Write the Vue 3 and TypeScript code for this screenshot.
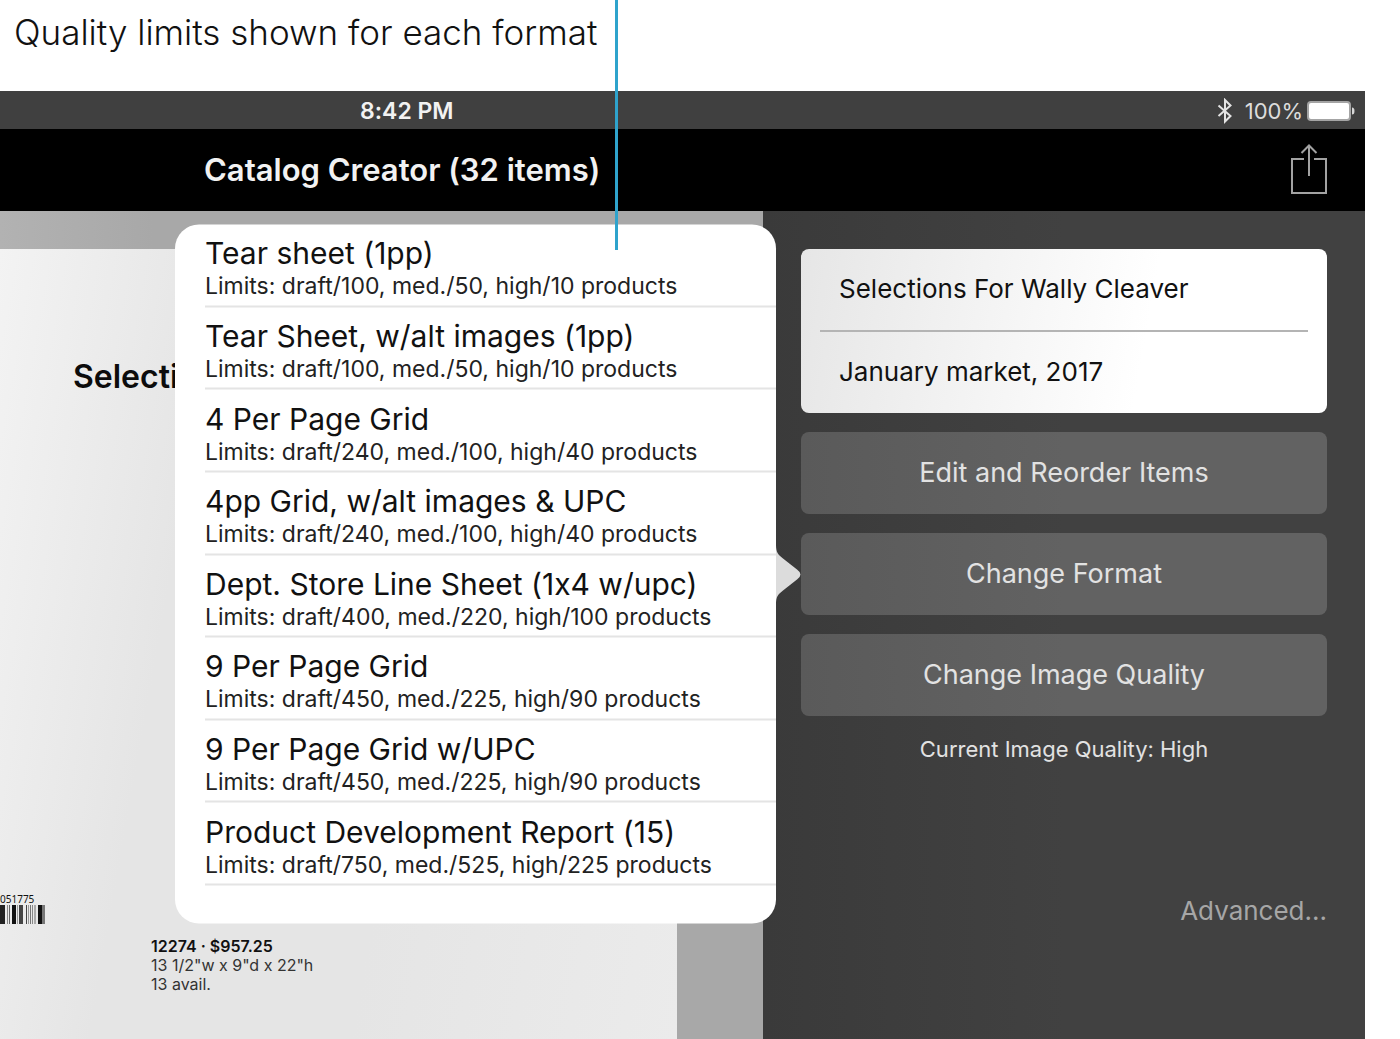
<script setup lang="ts">
import { ref } from 'vue'

interface Format {
  name: string
  draft: number
  med: number
  high: number
}

const formats: Format[] = [
  { name: 'Tear sheet (1pp)', draft: 100, med: 50, high: 10 },
  { name: 'Tear Sheet, w/alt images (1pp)', draft: 100, med: 50, high: 10 },
  { name: '4 Per Page Grid', draft: 240, med: 100, high: 40 },
  { name: '4pp Grid, w/alt images & UPC', draft: 240, med: 100, high: 40 },
  { name: 'Dept. Store Line Sheet (1x4 w/upc)', draft: 400, med: 220, high: 100 },
  { name: '9 Per Page Grid', draft: 450, med: 225, high: 90 },
  { name: '9 Per Page Grid w/UPC', draft: 450, med: 225, high: 90 },
  { name: 'Product Development Report (15)', draft: 750, med: 525, high: 225 },
]

const catalogTitle = ref('Selections For Wally Cleaver')
const catalogSubtitle = ref('January market, 2017')
const popoverOpen = ref(true)

// Each bar is [x, width, colour] in the barcode's own units.
const bars: [number, number, string][] = [
  [0, 5, '#222'], [7, 1, '#888'], [9, 1, '#666'], [12, 4, '#111'], [17, 1, '#999'],
  [19, 4, '#444'], [26, 1, '#444'], [28, 1, '#999'], [30, 1, '#777'], [32, 1, '#888'],
  [34, 2, '#aaa'], [38, 4, '#111'], [42, 3, '#777'],
]
</script>

<template>
  <div class="page">
    <header class="callout">
      <h1>Quality limits shown for each format</h1>
      <span class="leader"></span>
    </header>

    <div class="tablet">
      <div class="status">
        <span class="time">8:42 PM</span>
        <div class="indicators">
          <svg width="16" height="26" viewBox="0 0 16 26" aria-hidden="true">
            <path d="M1.500 7.500 L13.500 18 L8 23.500 V2 L13.500 7.500 L1.500 18" fill="none" stroke="#e4e4e4" stroke-width="2" />
          </svg>
          <span class="percent">100%</span>
          <svg width="48" height="20" viewBox="0 0 48 20" aria-hidden="true">
            <rect x="1" y="1" width="42" height="18" rx="3" fill="#fff" stroke="#a4a4a4" stroke-width="2" />
            <path d="M45 6.500 q2.500 0 2.500 3.500 t-2.500 3.500 z" fill="#d8d8d8" />
          </svg>
        </div>
      </div>

      <nav class="navbar">
        <h2>Catalog Creator (32 items)</h2>
        <button class="share" type="button" aria-label="Share">
          <svg width="38" height="52" viewBox="0 0 38 52" aria-hidden="true">
            <path d="M14 15 H2 V49 H36 V15 H24 M19 32 V1.500 M11.500 9 L19 1.500 L26.500 9" fill="none" stroke="#a2a2a2" stroke-width="2" />
          </svg>
        </button>
      </nav>

      <div class="content">
        <main class="preview">
          <article class="paper">
            <h3>Selecti</h3>
            <div class="products">
              <div class="barcode">
                <span>051775</span>
                <svg width="46" height="19" viewBox="0 0 46 19" aria-hidden="true">
                  <rect v-for="[x, w, fill] in bars" :key="x" :x="x" y="0" :width="w" height="19" :fill="fill" />
                </svg>
              </div>
              <p class="product">
                <strong>12274 · $957.25</strong><br />
                13 1/2"w x 9"d x 22"h<br />
                13 avail.
              </p>
            </div>
          </article>
        </main>

        <aside class="sidebar">
          <div class="fields">
            <input v-model="catalogTitle" type="text" aria-label="Catalog title" />
            <input v-model="catalogSubtitle" type="text" aria-label="Catalog subtitle" />
          </div>
          <button class="action" type="button">Edit and Reorder Items</button>
          <div class="anchor">
            <button class="action" type="button" :aria-expanded="popoverOpen" @click="popoverOpen = !popoverOpen">
              Change Format
            </button>
            <div v-if="popoverOpen" class="popover">
              <ul>
                <li v-for="f in formats" :key="f.name">
                  <button type="button">
                    <span class="name">{{ f.name }}</span>
                    <span class="limits">Limits: draft/{{ f.draft }}, med./{{ f.med }}, high/{{ f.high }} products</span>
                  </button>
                </li>
              </ul>
              <svg class="arrow" width="25" height="60" viewBox="0 0 25 60" aria-hidden="true">
                <path d="M0 0 C0 8 2 10 7 14 L21 25 Q28 30 21 35 L7 46 C2 50 0 52 0 60 Z" fill="#dcdcdc" />
              </svg>
            </div>
          </div>
          <button class="action" type="button">Change Image Quality</button>
          <p class="quality">Current Image Quality: High</p>
          <a class="advanced" href="#advanced">Advanced...</a>
        </aside>
      </div>
    </div>
  </div>
</template>

<style>
body {
  margin: 0;
  background: #fff;
}
</style>

<style scoped>
.page {
  position: relative;
  display: flex;
  flex-direction: column;
  min-height: 100vh;
  box-sizing: border-box;
  padding-right: 35px;
  overflow: hidden;
  font-family: Inter, "Liberation Sans", sans-serif;
  font-variant-ligatures: no-contextual;
  color: #111;
}

h1,
h2,
h3,
p,
ul {
  margin: 0;
  padding: 0;
  list-style: none;
}

button {
  border: 0;
  padding: 0;
  background: none;
  font: inherit;
  font-variant-ligatures: no-contextual;
  color: inherit;
  cursor: pointer;
}

svg {
  display: block;
}

.callout {
  padding: 12px 14px 39px;
}

.callout h1 {
  font-size: 35px;
  line-height: 40px;
  font-weight: 300;
  white-space: nowrap;
}

.leader {
  position: absolute;
  z-index: 3;
  top: 0;
  left: 615px;
  width: 3px;
  height: 250px;
  background: #2fa3cc;
}

.tablet {
  flex: 1;
  display: flex;
  flex-direction: column;
}

.status {
  display: flex;
  align-items: center;
  justify-content: space-between;
  height: 38px;
  box-sizing: border-box;
  padding: 2px 10px 0 360px;
  background: #404040;
  color: #f2f2f2;
}

.time {
  font-size: 23px;
  line-height: 28px;
  font-weight: 600;
}

.indicators {
  display: flex;
  align-items: center;
}

.percent {
  margin: 0 4px 0 12px;
  font-size: 22px;
  line-height: 28px;
  color: #dcdcdc;
}

.navbar {
  display: flex;
  align-items: center;
  justify-content: space-between;
  height: 82px;
  padding: 0 37px 0 204px;
  background: #000;
  color: #f2f2f2;
}

.navbar h2 {
  font-size: 31px;
  line-height: 40px;
  font-weight: 600;
}

.content {
  flex: 1;
  display: flex;
}

.preview {
  flex: 1;
  display: flex;
  padding: 38px 86px 0 0;
  background: linear-gradient(90deg, #b2b2b2, #a8a8a8 20%);
}

.paper {
  flex: 1;
  background: linear-gradient(100deg, #f3f3f3, #e5e5e5 28%, #e5e5e5 60%, #ebebeb);
}

.paper h3 {
  padding: 108px 0 0 73px;
  font-size: 32px;
  line-height: 40px;
  font-weight: 600;
  color: #0c0c0c;
}

.products {
  display: flex;
  gap: 105px;
  padding-top: 496px;
}

.barcode span {
  display: block;
  font: 10px/12px "Noto Sans", sans-serif;
}

.product {
  padding-top: 44px;
  font-size: 16px;
  line-height: 19px;
  color: #333;
}

.product strong {
  font-weight: 600;
  color: #111;
}

.sidebar {
  width: 602px;
  box-sizing: border-box;
  display: flex;
  flex-direction: column;
  gap: 19px;
  padding: 38px;
  background: linear-gradient(90deg, #3a3a3a, #414141 50%);
}

.fields {
  display: flex;
  flex-direction: column;
  padding: 0 19px;
  border-radius: 8px;
  background: linear-gradient(100deg, #e6e6e6, #fff 65%);
}

.fields input {
  min-width: 0;
  height: 81px;
  box-sizing: border-box;
  border: 0;
  padding: 0 19px 3px;
  background: none;
  outline: none;
  font: 26px/32px Inter, "Liberation Sans", sans-serif;
  color: #111;
}

.fields input + input {
  height: 83px;
  border-top: 2px solid #b4b4b4;
}

.action {
  width: 100%;
  height: 82px;
  border-radius: 8px;
  background: linear-gradient(90deg, #5a5a5a, #626262 50%);
  font-size: 27px;
  line-height: 36px;
  color: #e2e2e2;
}

.anchor {
  position: relative;
}

.popover {
  position: absolute;
  z-index: 2;
  top: 50%;
  right: calc(100% + 25px);
  width: 601px;
  transform: translateY(-50%);
  padding-bottom: 38px;
  border-radius: 24px;
  box-sizing: border-box;
  background: #fff;
}

.popover ul {
  display: grid;
  grid-auto-rows: 1fr;
  min-height: 661px;
  padding-left: 30px;
}

.popover li {
  display: flex;
  border-bottom: 2px solid #e4e4e4;
}

.popover li button {
  flex: 1;
  display: flex;
  flex-direction: column;
  justify-content: center;
  padding-top: 5px;
  text-align: left;
}

.name {
  font-size: 30px;
  line-height: 37px;
}

.limits {
  font-size: 23px;
  line-height: 28px;
  color: #222;
}

.arrow {
  position: absolute;
  top: calc(50% - 30px);
  left: 100%;
}

.quality {
  font-size: 22px;
  line-height: 28px;
  text-align: center;
  color: #e2e2e2;
}

.advanced {
  margin-top: 111px;
  align-self: flex-end;
  font-size: 26px;
  line-height: 36px;
  color: #a6a6a6;
  text-decoration: none;
}
</style>
